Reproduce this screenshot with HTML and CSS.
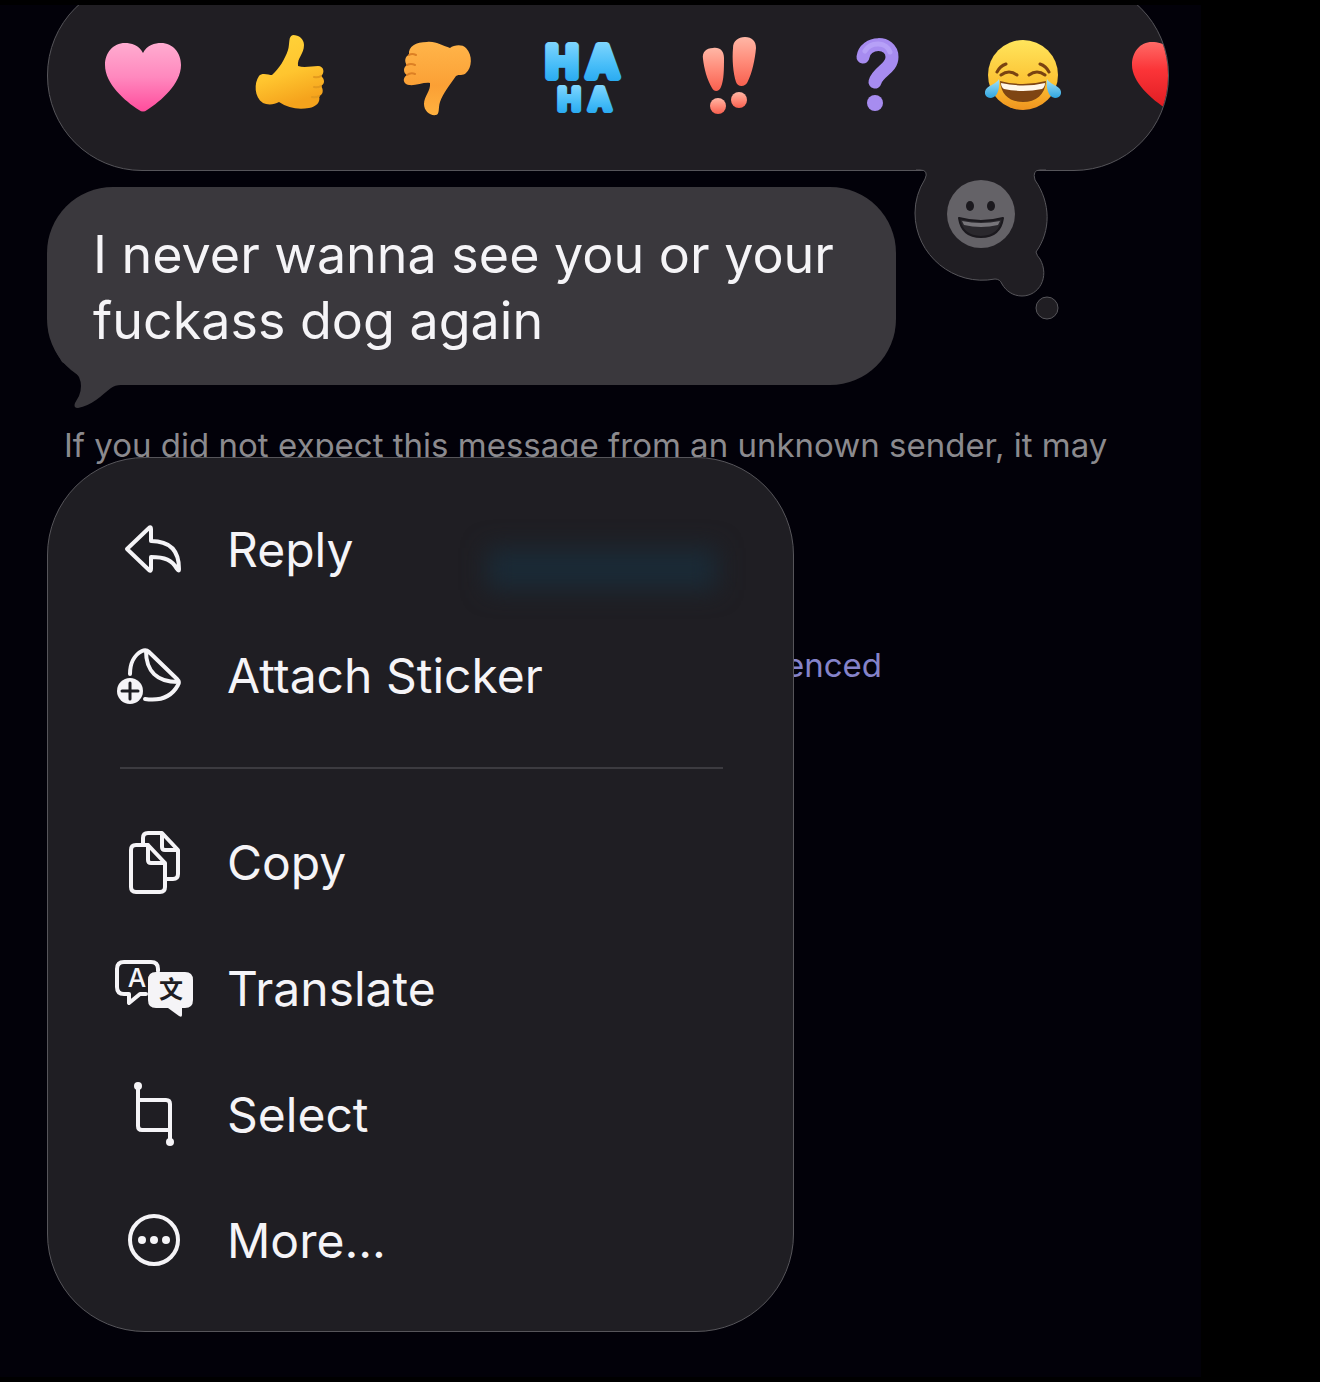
FILE: index.html
```html
<!DOCTYPE html>
<html lang="en">
<head>
  <meta charset="UTF-8">
  <meta name="viewport" content="width=device-width, initial-scale=1.0">
  <title>Messages</title>
  <link rel="stylesheet" href="styles.css">
</head>
<body>
  <main class="screen">
    <!-- Reaction picker -->
    <div class="tapback">
      <div class="reactions">
        <button type="button" class="reaction" aria-label="Heart">
          <svg viewBox="0 0 76 80">
            <defs>
              <linearGradient id="pink" x1="0" y1="0" x2="0" y2="1">
                <stop offset="0" stop-color="#ffacd0"/>
                <stop offset="0.5" stop-color="#ff88be"/>
                <stop offset="1" stop-color="#ff4c9c"/>
              </linearGradient>
            </defs>
            <path fill="url(#pink)" d="M38 17C42 9 50 7 56 7C68 7 76 17 76 29C76 48 56 65 42 74Q38 77 34 74C20 65 0 48 0 29C0 17 8 7 20 7C26 7 34 9 38 17Z"/>
          </svg>
        </button>
        <button type="button" class="reaction" aria-label="Thumbs up">
          <svg viewBox="0 0 76 80">
            <defs>
              <linearGradient id="thumb" x1="0" y1="0" x2="0.3" y2="1">
                <stop offset="0" stop-color="#ffd53b"/>
                <stop offset="0.6" stop-color="#ffc52f"/>
                <stop offset="1" stop-color="#f5a31c"/>
              </linearGradient>
            </defs>
            <path fill="url(#thumb)" d="M41 -1C47 -1 52 3 52 9C52 18 45 22 46 30C52 32 60 30 66 30C72 30 73 37 69 40C73 43 73 48 69 50C72 54 71 59 67 60C69 66 64 71 57 72C46 74 36 72 27 66C22 69 15 69 11 67C2 61 2 47 7 40C10 36 17 39 20 39C27 33 33 23 36 14C38 8 36 0 41 -1Z"/>
            <path class="crease" stroke="#e39a1e" d="M62 41Q66 42 69 40M62 51Q66 52 69 50M60 61Q64 62 67 60"/>
          </svg>
        </button>
        <button type="button" class="reaction" aria-label="Thumbs down">
          <svg viewBox="0 0 76 80">
            <defs>
              <linearGradient id="down" x1="0" y1="0" x2="0" y2="1">
                <stop offset="0" stop-color="#ffb54a"/>
                <stop offset="0.6" stop-color="#fba035"/>
                <stop offset="1" stop-color="#ffb13f"/>
              </linearGradient>
            </defs>
            <path fill="url(#down)" d="M28 6C37 5 44 10 51 12C55 9 63 8 67 12C74 19 73 32 67 37C64 40 60 38 57 40C51 49 44 57 41 66C39 72 41 78 37 79C31 80 25 75 25 68C25 60 32 55 31 47C25 46 16 50 10 49C4 48 3 42 8 39C4 37 4 31 8 29C5 26 6 20 10 19C9 10 17 6 28 6Z"/>
            <path class="crease" stroke="#dd8024" d="M8 39Q12 36 16 38M8 29Q12 27 16 29M10 19Q13 17 17 19"/>
          </svg>
        </button>
        <button type="button" class="reaction" aria-label="Ha ha">
          <svg viewBox="0 0 76 80">
            <defs>
              <linearGradient id="haha" x1="0" y1="0" x2="0" y2="1">
                <stop offset="0" stop-color="#8fdcff"/>
                <stop offset="0.6" stop-color="#45bcf8"/>
                <stop offset="1" stop-color="#20a4ee"/>
              </linearGradient>
            </defs>
            <text class="ha ha-big" x="0 41" y="41">HA</text>
            <text class="ha ha-small" x="12 43" y="74">HA</text>
          </svg>
        </button>
        <button type="button" class="reaction" aria-label="Emphasize">
          <svg viewBox="0 0 76 80">
            <defs>
              <linearGradient id="coral" x1="0" y1="0" x2="0" y2="1">
                <stop offset="0" stop-color="#ffb7a6"/>
                <stop offset="0.5" stop-color="#ff8b79"/>
                <stop offset="1" stop-color="#f8604f"/>
              </linearGradient>
            </defs>
            <g fill="url(#coral)">
              <path d="M20 12C27 11 31 15 31 22C31 33 31 44 28 51C26 56 21 56 19 52C14 44 11 32 10 23C9 16 13 12 20 12Z"/>
              <path d="M52 1C59 1 63 5 63 12C62 24 59 37 55 45C53 51 45 52 43 46C40 37 39 23 40 12C40 5 45 1 52 1Z"/>
              <circle cx="25" cy="70" r="8"/>
              <circle cx="46" cy="64" r="8"/>
            </g>
          </svg>
        </button>
        <button type="button" class="reaction" aria-label="Question">
          <svg viewBox="0 0 76 80">
            <path fill="none" stroke="#a78cf0" stroke-width="13" stroke-linecap="round" stroke-linejoin="round" d="M23 21C25 5 52 4 52 21C52 33 38 35 35 46"/>
            <path fill="none" stroke="#b6a0f7" stroke-width="5" stroke-linecap="round" d="M25 15C31 5 47 6 50 16"/>
            <circle cx="35" cy="67" r="8" fill="#a78cf0"/>
          </svg>
        </button>
        <button type="button" class="reaction" aria-label="Tears of joy">
          <svg viewBox="0 0 76 80">
            <defs>
              <linearGradient id="face" x1="0" y1="0" x2="0" y2="1">
                <stop offset="0" stop-color="#ffe55c"/>
                <stop offset="0.6" stop-color="#fcc334"/>
                <stop offset="1" stop-color="#f0931e"/>
              </linearGradient>
              <linearGradient id="tear" x1="0" y1="0" x2="0" y2="1">
                <stop offset="0" stop-color="#a5e2f6"/>
                <stop offset="1" stop-color="#2ea5e0"/>
              </linearGradient>
            </defs>
            <circle cx="36" cy="39" r="35" fill="url(#face)"/>
            <path fill="none" stroke="#7a4311" stroke-width="3" stroke-linecap="round" d="M14 39Q22 33 30 39M42 39Q50 33 58 39M10 36Q13 30 19 28M62 36Q59 30 53 28"/>
            <path fill="#7e4513" d="M13 45Q36 51 59 45C58 59 49 66 36 66C23 66 14 59 13 45Z"/>
            <path fill="#fff7ea" d="M14 47Q36 52 58 47Q58 51 55 53Q36 57 17 53Q14 51 14 47Z"/>
            <path fill="url(#tear)" d="M12 43C13 52 11 61 4 62C-2 62 -4 56 0 52C3 49 9 48 12 43Z"/>
            <path fill="url(#tear)" d="M60 43C59 52 61 61 68 62C74 62 76 56 72 52C69 49 63 48 60 43Z"/>
          </svg>
        </button>
        <button type="button" class="reaction" aria-label="Red heart">
          <svg viewBox="0 0 76 80">
            <defs>
              <linearGradient id="red" x1="0" y1="0" x2="0" y2="1">
                <stop offset="0" stop-color="#ff6a66"/>
                <stop offset="0.4" stop-color="#fb3438"/>
                <stop offset="1" stop-color="#dd1a20"/>
              </linearGradient>
            </defs>
            <path fill="url(#red)" d="M38 17C34 9 26 6 18 6C6 6 -2 16 -2 29C-2 47 20 66 38 76C56 66 76 48 76 29C76 16 68 6 56 6C48 6 42 9 38 17Z"/>
          </svg>
        </button>
      </div>
      <button type="button" class="more-emoji" aria-label="Choose another emoji">
        <svg viewBox="0 0 152 160">
          <path fill="#201e23" d="M6 0H136V5H130Q122 5 125 15C141 38 141 66 126 87Q127 91 130 94C140 112 129 131 112 131C103 131 96 126 92 119Q90 114 85 114C44 122 5 90 5 48Q5 30 15 14Q19 5 10 5H6Z"/>
          <path class="rim" d="M6 5H10Q19 5 15 14Q5 30 5 48C5 90 44 122 85 114Q90 114 92 119C96 126 103 131 112 131C129 131 140 112 130 94Q127 91 126 87C141 66 141 38 125 15Q122 5 130 5H136"/>
          <circle class="rim dot" cx="137" cy="143" r="11"/>
          <circle cx="71" cy="49" r="34" fill="#646267"/>
          <ellipse cx="60" cy="41" rx="4" ry="5" fill="#1b191e"/>
          <ellipse cx="81" cy="41" rx="4" ry="5" fill="#1b191e"/>
          <path fill="#2a282d" stroke="#1b191e" stroke-width="2" stroke-linejoin="round" d="M49 53Q71 59 93 53C91 66 83 72 71 72C59 72 51 66 49 53Z"/>
          <path fill="#77757a" d="M52 56Q71 60 90 56L88 60Q71 64 54 60Z"/>
        </svg>
      </button>
    </div>

    <!-- Message bubble -->
    <div class="bubble">
      <p>I never wanna see you or your fuckass dog again</p>
      <svg class="bubble-tail" viewBox="0 0 75 60">
        <path d="M0 0L7 12Q20 20 24 27Q28 36 24 46L20 53Q18 58 23 58C36 56 47 45 56 38Q60 35 66 35H75V0Z"/>
      </svg>
    </div>

    <div class="stack">
      <div class="notice">
        <p>If you did not expect this message from an unknown sender, it may</p>
        <a href="#">enced</a>
      </div>

      <!-- Context menu -->
      <nav class="menu">
        <button type="button" class="menu-item">
          <svg viewBox="0 0 80 80">
            <path d="M13 40L35 19Q37 17 37 20V32C56 32 65 42 65 60Q65 63 63 60C58 51 51 48 37 48V60Q37 63 35 61Z"/>
          </svg>
          Reply
        </button>
        <button type="button" class="menu-item">
          <svg viewBox="0 0 80 80">
            <path d="M16 39C16 29 20 20 28 16Q32 14 35 17L63 44Q66 47 64 50C57 63 45 66 31 64M32 16C32 36 43 47 64 47"/>
            <circle class="solid" cx="16" cy="56" r="13"/>
            <path class="knockout" d="M8 56H24M16 48V64"/>
          </svg>
          Attach Sticker
        </button>
        <hr>
        <button type="button" class="menu-item">
          <svg viewBox="0 0 80 80">
            <path d="M34 23H22Q17 23 17 28V65Q17 70 22 70H46Q51 70 51 65V41L34 23V38Q34 41 37 41H51"/>
            <path d="M29 22V16Q29 11 34 11H48L64 28V52Q64 57 59 57H52M48 12V25Q48 28 51 28H63"/>
          </svg>
          Copy
        </button>
        <button type="button" class="menu-item">
          <svg viewBox="0 0 80 80">
            <path d="M32 46H26L15 55V46H10Q3 46 3 39V21Q3 14 10 14H37Q44 14 44 21V23"/>
            <path class="solid" d="M42 24H71Q79 24 79 32V52Q79 60 71 60H68V67Q68 70 65 68L54 60H42Q34 60 34 52V32Q34 24 42 24Z"/>
            <text class="glyph-a" x="23" y="39">A</text>
            <text class="glyph-wen" x="57" y="50">文</text>
          </svg>
          Translate
        </button>
        <button type="button" class="menu-item">
          <svg viewBox="0 0 80 80">
            <path d="M24 12V52Q24 56 28 56H56M24 26H52Q56 26 56 30V68"/>
            <circle class="solid" cx="24" cy="12" r="4"/>
            <circle class="solid" cx="56" cy="68" r="4"/>
          </svg>
          Select
        </button>
        <button type="button" class="menu-item">
          <svg viewBox="0 0 80 80">
            <circle cx="40" cy="40" r="24"/>
            <circle class="solid" cx="28" cy="40" r="4"/>
            <circle class="solid" cx="40" cy="40" r="4"/>
            <circle class="solid" cx="52" cy="40" r="4"/>
          </svg>
          More...
        </button>
      </nav>
    </div>
  </main>
</body>
</html>
```
FILE: styles.css
```css
* {
  box-sizing: border-box;
}

body {
  margin: 0;
  padding: 5px 0;
  background: #000;
  color: #f5f4f7;
  font-family: Inter, "Noto Sans CJK SC", sans-serif;
}

p {
  margin: 0;
}

button {
  padding: 0;
  border: none;
  background: none;
  color: inherit;
  font: inherit;
  cursor: pointer;
}

svg {
  display: block;
  overflow: visible;
}

.screen {
  margin-right: 9%;
  padding: 0 32px 45px 47px;
  background: #020109;
  overflow: hidden;
}

/* Reaction picker */
.tapback {
  position: relative;
  margin-top: -25px;
}

.reactions {
  display: flex;
  align-items: center;
  gap: 71px;
  height: 191px;
  padding-left: 57px;
  border: 1px solid #56555a;
  border-radius: 95px;
  background: #201e23;
  overflow: hidden;
}

.reaction {
  flex: 0 0 76px;
}

.crease {
  fill: none;
  stroke-width: 2;
  stroke-linecap: round;
}

.ha {
  fill: url(#haha);
  stroke: url(#haha);
  stroke-linejoin: round;
  font-weight: 600;
}

.ha-big {
  font-size: 43px;
  stroke-width: 8px;
}

.ha-small {
  font-size: 30px;
  stroke-width: 6px;
}

.more-emoji {
  position: absolute;
  top: 185px;
  right: 107px;
  width: 152px;
}

.rim {
  fill: none;
  stroke: #56555a;
}

.rim.dot {
  fill: #201e23;
}

/* Message bubble */
.bubble {
  position: relative;
  width: 849px;
  max-width: 100%;
  margin-top: 16px;
  padding: 35px 40px 31px 46px;
  border-radius: 66px;
  background: #3a383d;
  font-size: 52px;
  line-height: 66px;
}

.bubble-tail {
  position: absolute;
  left: 8px;
  bottom: -25px;
  width: 75px;
  fill: #3a383d;
}

/* Unknown sender notice, partly under the menu */
.stack {
  display: grid;
  margin-top: 38px;
}

.notice,
.menu {
  grid-area: 1 / 1;
}

.notice {
  padding-left: 17px;
  color: #8b8a8e;
  font-size: 33px;
  line-height: 44px;
  white-space: nowrap;
}

.notice a {
  display: block;
  margin: 176px 0 0 721px;
  color: #8583c9;
  text-decoration: none;
}

/* Context menu */
.menu {
  position: relative;
  justify-self: start;
  width: 747px;
  max-width: 100%;
  margin-top: 34px;
  padding: 28px 66px;
  border: 1px solid #56555a;
  border-radius: 98px;
  background: #1f1e23;
}

.menu::before {
  content: '';
  position: absolute;
  top: 90px;
  right: 76px;
  width: 230px;
  height: 42px;
  background: #1a2a36;
  filter: blur(12px);
}

.menu-item {
  position: relative;
  display: flex;
  align-items: center;
  gap: 33px;
  width: 100%;
  height: 126px;
  font-size: 48px;
  text-align: left;
}

.menu-item svg {
  flex: 0 0 80px;
  height: 80px;
  fill: none;
  stroke: #f5f4f7;
  stroke-width: 4px;
  stroke-linecap: round;
  stroke-linejoin: round;
}

.menu-item .solid {
  fill: #f5f4f7;
  stroke: none;
}

.menu-item .knockout {
  stroke: #1f1e23;
  stroke-width: 3px;
}

.menu-item .glyph-a,
.menu-item .glyph-wen {
  stroke: none;
  text-anchor: middle;
}

.menu-item .glyph-a {
  fill: #f5f4f7;
  font-size: 26px;
  font-weight: 500;
}

.menu-item .glyph-wen {
  fill: #1f1e23;
  font-size: 24px;
  font-weight: 700;
}

hr {
  height: 2px;
  margin: 29px 4px 30px 6px;
  border: none;
  background: #3c3b40;
}
```
